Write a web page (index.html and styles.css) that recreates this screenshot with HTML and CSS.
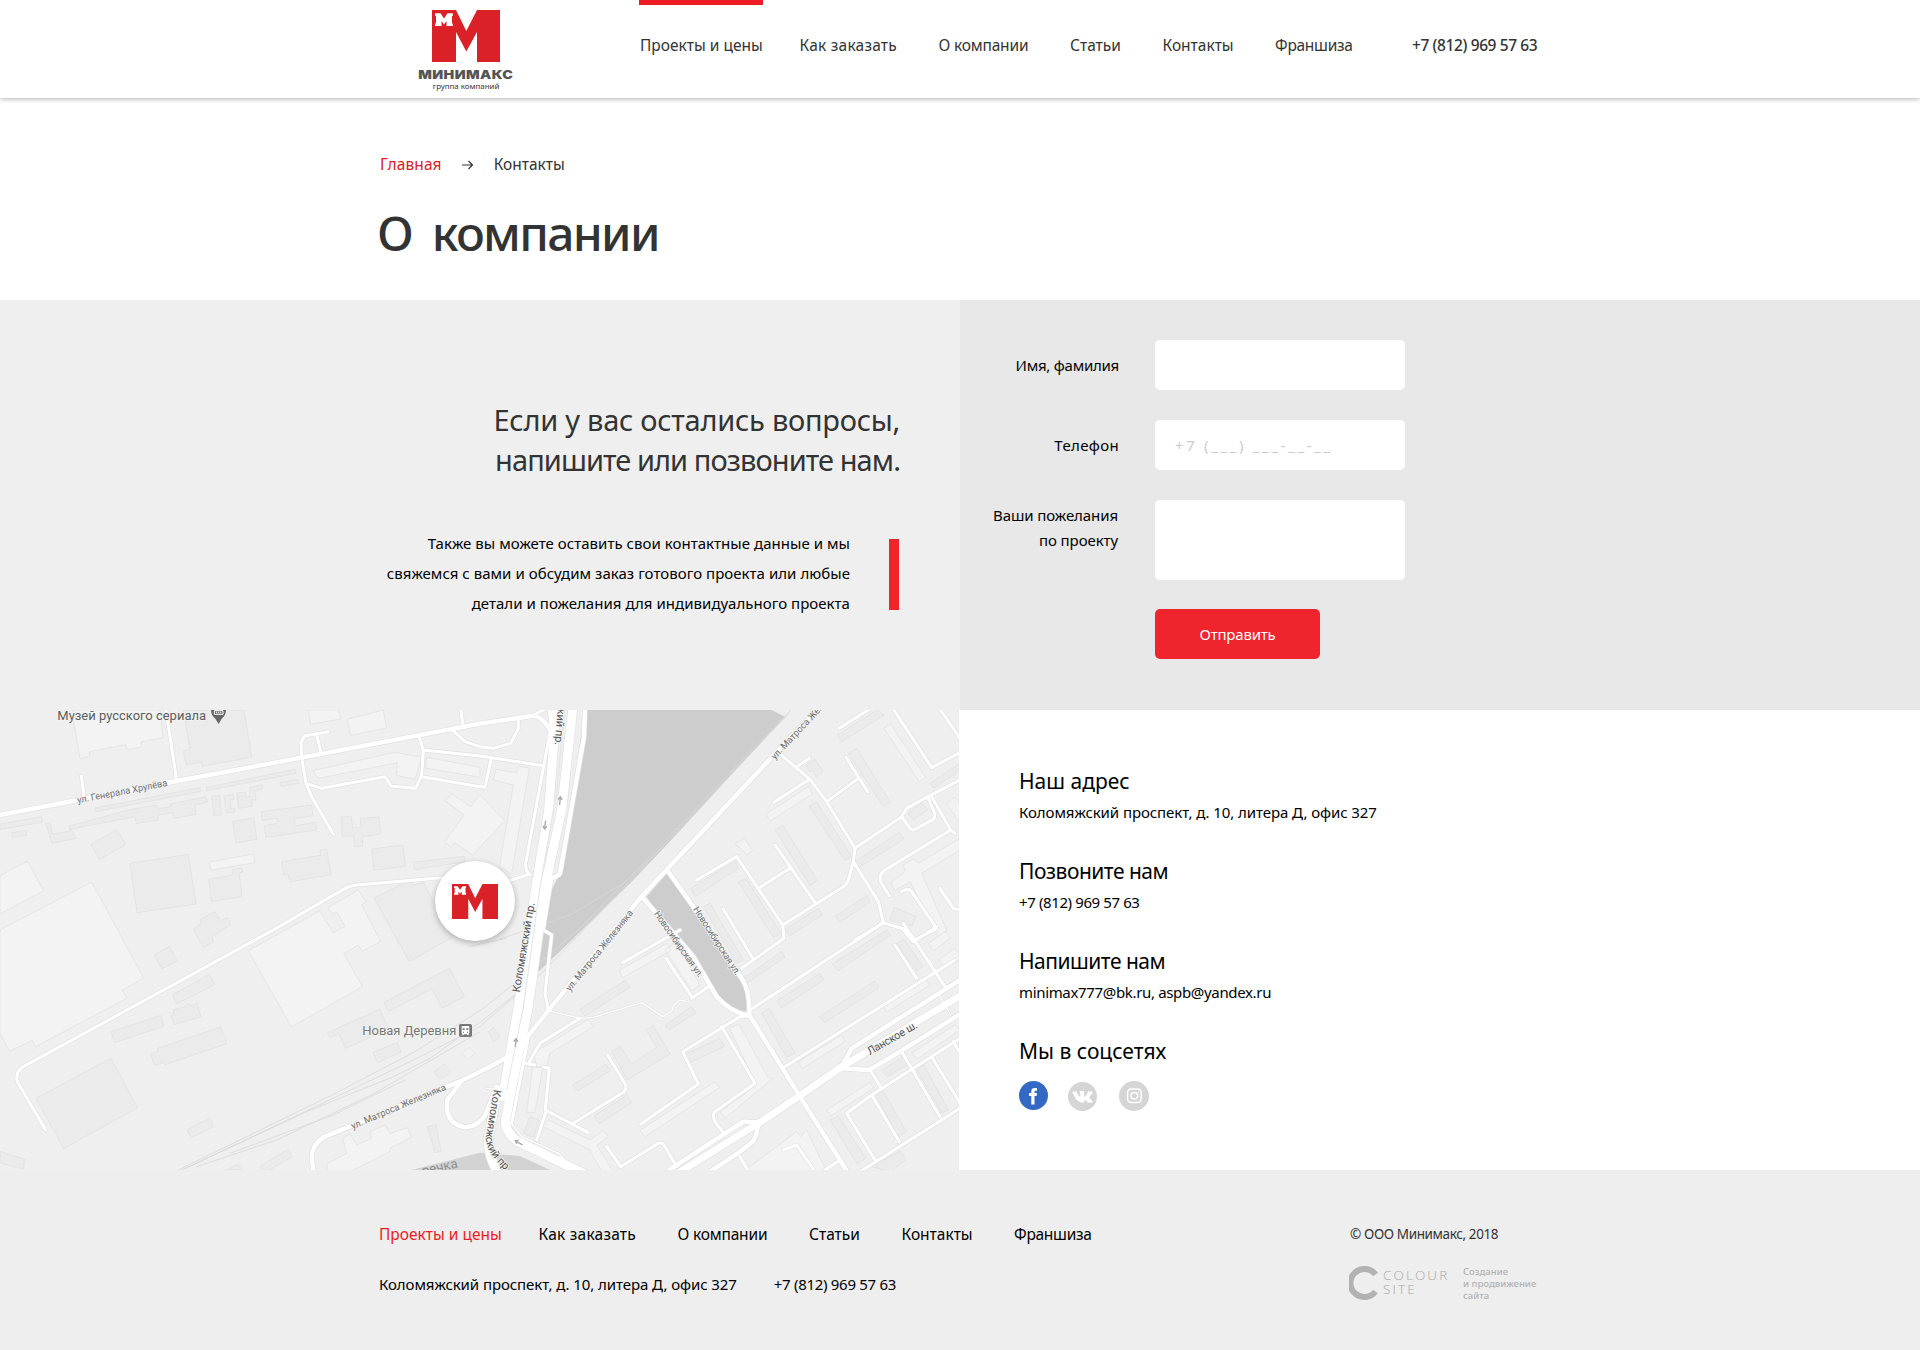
FILE: index.html
```html
<!DOCTYPE html>
<html lang="ru">
<head>
<meta charset="utf-8">
<title>Минимакс — Контакты</title>
<link rel="stylesheet" href="styles.css">
</head>
<body>
<svg class="defs" aria-hidden="true">
  <symbol id="logo-mark" viewBox="0 0 68 52" preserveAspectRatio="none">
    <path class="logo-red" d="M0 0H24L34.300 21 45 0H68V52H45V22L34.300 41.500 24 22V52H0Z"/>
    <path class="logo-white" d="M3 3.300H8.500L12 8.500 15.500 3.300H20.800V6H20V13.500H20.800V16H14.500V11L12 14.500 9.500 11V16H3V13.500H4V6H3Z"/>
  </symbol>
</svg>

<header class="header">
  <div class="container header-inner">
    <a class="logo">
      <svg class="logo-mark"><use href="#logo-mark"/></svg>
      <span class="logo-name">МИНИМАКС</span>
      <span class="logo-sub">группа компаний</span>
    </a>
    <nav class="nav">
      <a class="active">Проекты и цены</a><a>Как заказать</a><a>О компании</a><a>Статьи</a><a>Контакты</a><a>Франшиза</a>
      <span class="nav-phone">+7 (812) 969 57 63</span>
    </nav>
  </div>
</header>

<section class="title container">
  <div class="crumbs">
    <a>Главная</a>
    <svg class="arrow" viewBox="0 0 12 10"><path d="M0 5H10.500M6.500 1L10.500 5 6.500 9"/></svg>
    <span>Контакты</span>
  </div>
  <h1>О компании</h1>
</section>

<section class="ask">
  <div class="ask-text">
    <h2><span>Если у вас остались вопросы,</span><br><span class="tight">напишите или позвоните нам.</span></h2>
    <p>Также вы можете оставить свои контактные данные и мы<br>свяжемся с вами и обсудим заказ готового проекта или любые<br>детали и пожелания для индивидуального проекта</p>
  </div>
  <form class="form">
    <label for="name" class="name">Имя, фамилия</label><input id="name">
    <label for="phone" class="phone">Телефон</label><input id="phone" placeholder="+7 (___) ___-__-__">
    <label for="wish" class="wish">Ваши пожелания<br>по проекту</label><textarea id="wish"></textarea>
    <button type="button">Отправить</button>
  </form>
</section>

<section class="place">
  <div class="map">
  <svg class="map-canvas" viewBox="0 0 2877 1380">
    <g class="light">
      <g transform="translate(0 -30)">
        <path d="M220 30V60L240 175 268 170V155L378 134 382 150 424 141V125L489 113 480 30Z"/>
        <path d="M628 486L760 462 765 488 632 511ZM925 30L932 73 1022 57 1015 30ZM1042 58L1150 30 1160 84 1052 106Z"/>
        <path d="M938 212L1185 157 1265 172 1245 238 1190 226 1192 188 955 235Z"/>
        <path d="M1280 172L1440 202V232L1276 204ZM1336 302L1355 282 1412 320 1440 285 1514 362 1418 465 1365 428 1355 440 1334 427 1392 345Z"/>
        <path d="M0 527L82 484 131 572 0 642Z"/>
        <path d="M0 690L275 546 431 834 367 870 380 895 107 1040 97 1021 29 1054 0 1000Z"/>
        <path d="M960 632L745 752 874 981 1087 860 1031 760 1075 735 1087 754 1142 724 1085 614 1097 605 1075 570 985 622 993 640 1012 638 1035 680 1000 699Z"/>
      </g>
      <g transform="translate(1440 -30)">
        <path d="M40 240L48 208 110 218 115 198 148 204 95 522 58 500 100 255Z"/>
        <path d="M1212 85L1232 72 1337 232 1318 245ZM858 342L985 260 998 282 870 363ZM765 432L793 415 818 452 800 465 782 445Z"/>
        <path d="M1232 548L1275 515 1270 495 1300 478 1315 490 1440 415V450L1325 520 1400 690 1375 710 1290 545 1245 572ZM1400 310L1425 292 1440 310V370Z"/>
      </g>
      <g transform="translate(0 660)">
        <path d="M1387 370L1407 352 1424 370 1404 389Z"/>
        <path d="M980 702L1040 670 1028 625 1050 612 1070 645 1115 625 1110 605 1155 585 1170 610 1222 593 1235 622 1170 655V665L1050 725H985Z"/>
      </g>
      <g transform="translate(1440 660)">
        <path d="M417 122L560 40 572 62 428 143ZM555 60L590 35 660 165 635 182ZM160 370L325 268 340 290 210 370 200 410H170Z"/>
        <path d="M480 600L705 455 718 473 495 620ZM748 295L778 283 862 440 878 445 735 565 720 545 830 465ZM1210 230L1335 145 1350 165 1220 247ZM955 395L1085 315 1095 335 967 415Z"/>
        <path d="M1297 368L1425 285 1440 300 1310 388ZM1040 540L1170 457 1180 475 1052 558ZM158 412H188L165 548H140ZM190 590L205 570 330 630 370 600 385 620 350 645 400 725H365L330 660ZM790 725L950 605 962 620 980 600 1040 725Z"/>
        <path d="M1345 40L1395 5 1410 25 1360 62ZM1375 90L1425 55 1440 75V90L1395 110Z"/>
      </g>
    </g>
    <g class="dark">
      <g transform="translate(0 -30)">
        <path d="M550 30L570 148 550 152 558 193 604 187 606 199 755 171 732 30Z"/>
        <path d="M620 262L885 208 888 220 620 272ZM840 248L892 238 896 250 843 260ZM284 324L600 263 602 274 287 335Z"/>
        <path d="M385 330L470 315 473 327 512 320V312L618 290 622 306 585 315 587 343 522 355 518 338 473 346 474 360 410 371 405 350 213 387 227 415 156 430 137 370 150 368 158 402 210 393 208 378Z"/>
        <path d="M0 372L124 350 126 367 0 388ZM35 398L78 391 80 406 37 412ZM272 434L350 389 377 433 298 479Z"/>
        <path d="M635 290L658 286 665 345 642 347ZM672 288L700 284 702 298 690 300 693 325 704 324 705 336 680 338ZM710 280L735 276 738 292 750 290V262L786 255 788 268 765 272 768 298 755 300 757 318 716 325Z"/>
        <path d="M698 364L762 354 770 418 707 428ZM783 335L935 315 938 347 883 357 886 377 948 367 950 390 798 412 793 377 833 370 830 354 787 362Z"/>
        <path d="M390 490L565 463 588 612 411 638ZM845 485L962 466 960 450 980 447 993 524 870 545 865 525 851 525ZM626 538L698 525 697 508 725 505 728 516 718 520 726 590 635 604Z"/>
        <path d="M1023 352L1053 348 1058 385 1083 381 1081 355 1137 351 1142 402 1088 410V438L1062 440V408L1027 408ZM1115 447L1208 435 1217 498 1122 511ZM1240 487L1392 469 1395 485 1245 509Z"/>
        <path d="M580 688L603 672 601 658 645 635 662 662 682 653 692 675 636 709 640 725 611 742ZM1122 594L1230 540 1240 555 1270 548 1360 710 1228 785Z"/>
      </g>
      <g transform="translate(1440 -30)">
        <path d="M1072 105L1190 30 1212 45 1085 126ZM1105 160L1130 145 1232 308 1210 320ZM988 318L1010 307 1115 470 1095 482ZM885 390L908 376 1013 542 990 556Z"/>
        <path d="M632 565L765 483 775 505 645 590ZM775 545L798 535 903 700 880 712ZM978 195L1005 178 1030 215 1008 230 1000 212 988 215ZM1125 485L1258 397 1272 417 1138 502Z"/>
        <path d="M1066 648L1160 587 1170 606 1080 667ZM915 688L1015 625 1027 645 930 707ZM1243 622L1308 650 1295 678 1230 660ZM1350 250L1440 190V210L1362 265ZM1283 340L1325 308 1343 330 1300 360ZM670 620L690 610 790 780 770 790Z"/>
      </g>
      <g transform="translate(0 660)">
        <path d="M463 75L508 49 533 93 486 116ZM517 195L628 133 645 163 580 197 530 221ZM513 258L520 255V240L555 230 565 220 572 228 590 220 603 260 522 284ZM333 305L482 256 491 289 344 338Z"/>
        <path d="M451 372L473 365V355L662 291 680 341 495 404 490 398 465 407ZM108 505L332 385 413 533 191 656ZM561 600L629 564 641 590 573 623ZM778 710L865 658 877 680 800 725ZM0 664L74 688 70 718 0 698Z"/>
        <path d="M1152 217L1348 115 1393 200 1327 234 1296 176 1165 245ZM982 308L1140 238 1165 298 1037 355 1018 313 990 322ZM1118 368L1192 337 1203 366 1133 398ZM1302 425L1334 402 1352 427 1320 448ZM1283 590L1308 584 1323 664 1305 668ZM680 720L715 702 725 720Z"/>
      </g>
      <g transform="translate(1440 660)">
        <path d="M300 237L435 152 450 172 315 258ZM555 285L635 230 648 248 568 300ZM278 465L378 403 390 423 293 483ZM395 365L420 348 455 402 530 352 498 300 520 287 570 372 442 450Z"/>
        <path d="M610 375L720 325 733 350 625 400ZM342 558L440 495 456 518 358 580ZM845 250L867 235 945 368 920 382ZM890 212L1020 130 1032 150 905 233ZM1018 260L1185 153 1197 173 1035 278Z"/>
        <path d="M1057 102L1220 0 1232 15 1075 122ZM1205 420L1275 378 1290 400 1220 440ZM1050 570L1075 558 1157 685 1132 702ZM1185 490L1208 482 1280 605 1255 620ZM1310 420L1332 405 1405 540 1385 548Z"/>
        <path d="M1250 40L1272 28 1330 110 1308 122ZM790 145L905 65 915 82 800 160ZM150 560L178 570 160 622 130 610ZM1175 710L1260 663 1278 690 1230 725ZM25 305L40 292 60 320 40 335Z"/>
      </g>
    </g>
    <g class="water" transform="translate(1440 -30)">
      <path d="M315 30H875L915 50 555 440 455 545 270 725 158 832 190 620 240 520Z"/>
      <path d="M565 515L640 620 790 840 805 880 803 930 780 938 740 915 700 870 570 690 500 590Z"/>
    </g>
    <path class="water river" transform="translate(1440 660)" d="M-205 720L0 668 120 678 215 722Z"/>
    <g class="rail">
      <path transform="translate(0 660)" d="M535 720L1000 493 1245 365 1440 242 1600 115 1745 -10 2375 -662M545 720L920 545 1180 440 1290 385 1460 262 1620 135 1760 -10 2365 -648M555 716L800 600 1230 395 1440 290 1600 150M690 670L1000 555 1215 450M590 710L830 630 1120 492 1440 305M1408 50L1440 42 1520 25"/>
      <path transform="translate(1440 -30)" d="M550 440L430 550 270 645 140 690 60 717"/>
    </g>
    <defs>
      <g id="paths">
        <path transform="translate(1440 660)" d="M210 243L300 265 340 262 485 218 548 260 575 245 580 228 597 210 620 215M95 580L125 620 235 670 255 690M20 475L45 478M105 435L125 436M1375 190L1412 255"/>
      </g>
      <g id="minor">
        <path transform="translate(0 -30)" d="M498 30L530 240M244 228L252 290M985 95L915 107 903 125 905 173 918 250 965 265 1155 230 1173 258 1247 265 1265 225 1270 150 1257 108M950 105L962 155M918 250L935 290 1000 403M1270 150L1440 168 1630 197M1265 230L1440 260M1355 88L1395 125 1440 140 1480 145 1532 130 1555 85V60M1382 20L1388 70"/>
        <path transform="translate(0 -30)" d="M1590 522L1535 540 1325 533 1070 555Q1050 557 1030 568L820 690 70 1100Q45 1115 52 1145L137 1290"/>
        <path transform="translate(1440 -30)" d="M33 178L15 262 0 258M155 48L200 25M205 -10L213 80 137 490Q135 510 150 525M215 540L190 690 215 705 195 880 205 930"/>
        <path transform="translate(1440 -30)" d="M895 158L990 238 1040 305 1125 445 1120 485 1195 605 1210 668 1125 720M955 197L988 174M985 240L882 307M1040 305L1135 235M1098 172L1163 275M1125 445L1265 350 1280 325 1340 292 1440 240M1265 350L1290 385Q1298 395 1310 385L1360 358Q1368 350 1362 335L1345 295M1355 290L1412 390 1425 400M1412 390L1215 510Q1195 525 1202 545L1228 587"/>
        <path transform="translate(1440 -30)" d="M1235 20L1355 203 1445 155M1078 85L1180 20M1375 20L1445 122M1120 485L1105 540Q1100 555 1090 560L908 675 770 470 650 540M840 562L930 505M885 435L1005 608M908 675L912 715 785 805M730 628L820 778M1265 575Q1285 560 1295 575L1370 685 1305 720 1280 690 1210 668M1380 565L1420 625 1440 630M810 930L1210 668M428 788L600 690M1270 690L1300 725"/>
        <path transform="translate(1440 660)" d="M808 258L780 260 608 365 655 462 482 583M725 290L825 460 705 545Q695 555 705 575L727 605M683 172L635 205M558 85L635 200M300 265L180 340 148 395M145 320L130 400 95 580M132 400L165 405M190 412L208 415 196 540 325 608M198 545L170 630M383 375L437 465Q440 480 430 487L280 580M380 650L422 710 535 640Q548 635 555 650L590 710"/>
        <path transform="translate(1440 660)" d="M780 680L805 725M912 412L1425 90M1245 45L1310 145M1270 -20L1290 10 1395 170M1300 35L1370 -10M1140 725L1440 535M1185 690L1100 550 1175 495 1440 325M1175 495L1258 635M1268 370L1380 560M1355 380L1440 520M1420 335L1440 370M1170 420L1205 475M910 660L950 645 1005 725M1020 730L1080 690"/>
      </g>
      <g id="streets">
        <path transform="translate(0 -30)" d="M-10 347L530 243 905 173 1440 71 1595 48Q1625 45 1650 90"/>
        <path transform="translate(1440 -30)" d="M315 25L312 110 240 520Q235 530 205 537M1060 -20L900 145 480 595 255 870 110 1050Q90 1070 0 1115L-55 1142 -470 1312Q-505 1335 -505 1375L-498 1420M-55 1142L-98 1200Q-108 1270 -45 1282 0 1280 20 1235L50 1160M490 595L640 770 710 890Q750 935 800 945M565 515L640 620 785 835Q810 870 808 945M808 945L960 1190 1105 1420"/>
        <path transform="translate(1440 660)" d="M840 577L790 575 570 718M835 580Q830 620 820 632 800 655 690 725M1085 410L1115 355 1440 150M1085 415L1165 420Q1190 410 1440 252"/>
      </g>
      <g id="avenue">
        <path transform="translate(1440 660)" d="M590 732L840 577 960 497 1085 410 1445 195"/>
      </g>
      <g id="main">
        <path transform="translate(1440 -30)" d="M230 10L206 330 168 560 115 920 68 1190M280 10L245 330 195 560 145 920 92 1180 76 1265Q78 1300 115 1325L320 1425M52 1170L30 1290Q12 1350 60 1430"/>
      </g>
    </defs>
    <use href="#paths" class="case w-path"/><use href="#minor" class="case w-minor"/><use href="#streets" class="case w-street"/><use href="#avenue" class="case w-avenue"/><use href="#main" class="case w-main"/>
    <use href="#paths" class="fill w-path"/><use href="#minor" class="fill w-minor"/><use href="#streets" class="fill w-street"/><use href="#avenue" class="fill w-avenue"/><use href="#main" class="fill w-main"/>
    <path class="median" transform="translate(1440 -30)" d="M253 30L232 260 180 560 130 920 80 1170"/>
    <g class="direction">
      <path d="M0 13V-9M-6 -3L0 -12 6 -3" transform="translate(1680 272) rotate(6)"/>
      <path d="M0 13V-9M-6 -3L0 -12 6 -3" transform="translate(1635 345) rotate(188)"/>
      <path d="M0 13V-9M-6 -3L0 -12 6 -3" transform="translate(1547 998) rotate(6)"/>
      <path d="M0 13V-9M-6 -3L0 -12 6 -3" transform="translate(1556 1298) rotate(-60)"/>
    </g>
    <g class="place-name">
      <text x="172" y="30" textLength="446">Музей русского сериала</text>
      <text class="station" x="1087" y="974" textLength="282">Новая Деревня</text>
    </g>
    <g class="street-name">
      <text transform="translate(233 280) rotate(-11)" textLength="275">ул. Генерала Хрулёва</text>
      <text transform="translate(2325 150) rotate(-47)" textLength="306">ул. Матроса Железняка</text>
      <text transform="translate(1710 845) rotate(-51)" textLength="303">ул. Матроса Железняка</text>
      <text transform="translate(1058 1258) rotate(-23)" textLength="306">ул. Матроса Железняка</text>
      <text transform="translate(1961 611) rotate(55)" textLength="236">Новосибирская ул.</text>
      <text transform="translate(2078 598) rotate(57)" textLength="238">Новосибирская ул.</text>
    </g>
    <g class="avenue-name">
      <text transform="translate(1559 848) rotate(-80.500)" textLength="272">Коломяжский пр.</text>
      <text transform="translate(1664 105) rotate(95)" text-anchor="end" textLength="272">Коломяжский пр.</text>
      <path id="bend" class="guide" d="M1481 1138L1458 1280Q1452 1335 1560 1420"/>
      <text><textPath href="#bend">Коломяжский пр.</textPath></text>
      <text transform="translate(2609 1036) rotate(-30)" textLength="168">Ланское ш.</text>
    </g>
    <text class="river-name" transform="translate(1375 1372) rotate(-13)" text-anchor="end">Чёрная речка</text>
    <path class="poi" d="M633 0H678Q677 18 665 26L656 42 646 26Q634 18 633 0Z"/>
    <path class="poi-detail" d="M643 2H669V13H643ZM650 5V10M656 5V10M662 5V10"/>
    <g transform="translate(1377 942)">
      <rect class="station-box" width="39" height="39" rx="6"/>
      <path class="station-train" d="M11 6H28Q31 6 31 9V27Q31 30 28 30L31 34H26L24 31H15L13 34H8L11 30Q8 30 8 27V9Q8 6 11 6Z"/>
      <path class="station-detail" d="M11 13H17V18H11ZM22 13H28V18H22ZM12 23H15V26H12ZM24 23H27V26H24Z"/>
    </g>
  </svg>
  <div class="marker"><svg><use href="#logo-mark"/></svg></div>
  </div>

  <div class="contacts">
    <h3>Наш адрес</h3><p class="addr">Коломяжский проспект, д. 10, литера Д, офис 327</p>
    <h3 class="call">Позвоните нам</h3><p class="tel">+7 (812) 969 57 63</p>
    <h3 class="write">Напишите нам</h3><p class="mail">minimax777@bk.ru, aspb@yandex.ru</p>
    <h3>Мы в соцсетях</h3>
    <div class="social">
      <svg class="fb" viewBox="0 0 29 29"><circle cx="14.500" cy="14.500" r="14.500"/><path d="M12.300 23.500V15H10V12H12.300V10.300Q12.300 7 15.800 7H18V9.800H16.600Q15.500 9.800 15.500 11V12H18L17.600 15H15.500V23.500Z"/></svg>
      <svg class="vk" viewBox="0 0 29 29"><circle cx="14.500" cy="14.500" r="14.500"/><path transform="translate(4.300 4.600) scale(.85)" d="M11.701 18.771h1.437s.433-.047.654-.284c.21-.221.21-.63.21-.63s-.031-1.927.869-2.210c.887-.281 2.012 1.860 3.211 2.683.916.629 1.605.494 1.605.494l3.211-.044s1.682-.105.887-1.426c-.061-.105-.451-.975-2.371-2.760-2.012-1.861-1.742-1.561.676-4.787 1.469-1.965 2.070-3.166 1.875-3.676-.166-.480-1.260-.361-1.260-.361l-3.602.031s-.270-.031-.465.090c-.195.119-.314.391-.314.391s-.572 1.529-1.336 2.820c-1.623 2.729-2.268 2.879-2.523 2.699-.604-.391-.449-1.580-.449-2.432 0-2.641.404-3.750-.781-4.035-.390-.091-.681-.150-1.685-.166-1.290-.014-2.378.010-2.995.311-.405.203-.720.652-.539.675.240.030.779.146 1.064.537.375.506.359 1.636.359 1.636s.211 3.116-.494 3.503c-.495.262-1.155-.280-2.595-2.756-.735-1.260-1.291-2.670-1.291-2.670s-.105-.256-.299-.406c-.227-.165-.557-.225-.557-.225l-3.435.030s-.510.016-.689.240c-.166.195-.016.615-.016.615s2.686 6.287 5.732 9.453c2.790 2.902 5.956 2.715 5.956 2.715z"/></svg>
      <svg class="ig" viewBox="0 0 30 30"><circle cx="15" cy="15" r="15"/><g><rect x="8.600" y="8" width="13.500" height="13.500" rx="3.500"/><circle cx="15.300" cy="14.800" r="3.300"/><path d="M18.800 11.200h.8"/></g></svg>
    </div>
  </div>
</section>

<footer class="footer">
  <div class="container footer-inner">
    <div>
      <nav class="nav footer-nav">
        <a class="active">Проекты и цены</a><a>Как заказать</a><a>О компании</a><a>Статьи</a><a>Контакты</a><a>Франшиза</a>
      </nav>
      <div class="footer-row"><span class="addr">Коломяжский проспект, д. 10, литера Д, офис 327</span><span class="tel">+7 (812) 969 57 63</span></div>
    </div>
    <div class="legal">
      <div class="copy">© ООО Минимакс, 2018</div>
      <div class="studio">
        <svg class="studio-mark" viewBox="0 0 30 34"><path d="M26.500 8.500A14 14 0 1 0 26.500 25.500"/></svg>
        <div class="studio-name"><span>COLOUR</span><span>SITE</span></div>
        <div class="studio-note">Создание<br>и продвижение<br>сайта</div>
      </div>
    </div>
  </div>
</footer>
</body>
</html>
```
FILE: styles.css
```css
* { box-sizing: border-box; }
body { margin: 0; width: 1920px; height: 1350px; overflow: hidden; background: #fff; color: #000; font: 15px/30px "Noto Sans", sans-serif; }
h1, h2, h3, p { margin: 0; font-weight: 400; }
.defs { position: absolute; width: 0; height: 0; }
.container { width: 1162px; margin: 0 auto; }
.logo-red { fill: #da2128; }
.logo-white { fill: #fff; }

.header { height: 98px; box-shadow: 0 1px 5px rgba(0, 0, 0, .3); }
.header-inner { display: flex; }
.logo { width: 174px; height: 98px; padding-top: 10px; margin-right: 42.500px; display: flex; flex-direction: column; align-items: center; flex: none; }
.logo-mark { width: 68px; height: 52px; display: block; }
.logo-name { font: 900 12.200px/16px Inter, sans-serif; color: #555; margin-top: 5px; letter-spacing: .350px; transform: scaleX(1.165); }
.logo-sub { font: 400 7.900px/10px "Noto Sans", sans-serif; color: #333; margin-top: -2px; }
.nav { display: grid; grid-template-columns: 159.500px 139px 131.500px 92.500px 112.500px 137px auto; color: #333; font-size: 15.500px; line-height: 20px; white-space: nowrap; }
.header .nav { margin-left: 43.500px; }
.nav > * { padding-top: 35px; padding-left: 1px; justify-self: start; }
.nav a:nth-child(2) { letter-spacing: .220px; }
.nav a:nth-child(3) { letter-spacing: -.180px; }
.nav a:nth-child(6) { letter-spacing: -.280px; }
.header .active { padding-top: 30px; border-top: 5px solid #ed1c24; }
.nav-phone { font-weight: 500; letter-spacing: -.380px; }

.title { height: 202px; padding-top: 54px; }
.crumbs { display: flex; align-items: center; height: 24px; font-size: 15.500px; color: #333; padding-left: 1px; }
.crumbs a { color: #da2128; letter-spacing: .100px; }
.arrow { width: 12px; height: 10px; margin: 1px 20px 0 20px; fill: none; stroke: #333; stroke-width: 1.200; }
h1 { font-size: 48px; font-weight: 500; line-height: 60px; letter-spacing: -1.700px; word-spacing: 9px; color: #333; margin: 27px 0 0 -2px; }

.ask { display: flex; height: 410px; }
.ask-text { width: 960px; background: #efefef; padding: 100px 60px 0 0; text-align: right; }
h2 { font-size: 29px; line-height: 40px; color: #333; letter-spacing: -.250px; }
h2 .tight { letter-spacing: -.920px; }
.ask-text p { display: flex; flex-direction: column; justify-content: center; margin: 59px 1px 0 0; height: 71px; border-right: 10px solid #f0242c; padding: 0 39px 0 0; line-height: 30px; letter-spacing: .040px; }
.ask-text p { display: block; }
.ask-text p::before { content: ""; display: block; height: 0; margin-top: -11px; padding-bottom: 0; }
.ask-text p { display: flow-root; }
.form { width: 960px; background: #e8e8e8; padding-top: 40px; display: grid; grid-template-columns: 159px 250px; column-gap: 36px; row-gap: 30px; align-content: start; text-align: right; }
.form label { line-height: 50px; }
.form .name { letter-spacing: -.250px; }
.form .phone { letter-spacing: .350px; }
.form .wish { line-height: 25px; padding: 3px 1px 0 0; letter-spacing: -.080px; }
.form input, .form textarea { border: 0; border-radius: 5px; background: #fff; height: 50px; width: 250px; padding: 0 20px; font: 15px "Noto Sans", sans-serif; resize: none; display: block; }
.form textarea { height: 80px; }
.form input::placeholder { color: #ccc; letter-spacing: 2.650px; opacity: 1; }
.form button { grid-column: 2; width: 165px; height: 50px; margin-top: -1px; border: 0; border-radius: 5px; background: #f0242c; color: #fff; font: 15px "Noto Sans", sans-serif; letter-spacing: -.200px; padding: 0; }

.place { display: flex; height: 460px; }
.map { position: relative; width: 959px; height: 460px; overflow: hidden; background: #efefef; flex: none; }
.map-canvas { display: block; width: 959px; height: 460px; }
.light { fill: #f3f3f3; stroke: #e2e2e2; stroke-width: 2.500; }
.dark { fill: #ebebeb; stroke: #e1e1e1; stroke-width: 2.500; }
.water { fill: #cdcdcd; }
.river { fill: #d2d2d2; }
.rail { fill: none; stroke: #d9d9d9; stroke-width: 2.500; }
.case, .fill { fill: none; stroke-linecap: round; stroke-linejoin: round; }
.case { stroke: #e1e1e1; }
.fill { stroke: #fff; }
.w-path.fill { stroke-width: 4px; } .w-path.case { stroke-width: 7px; }
.w-minor.fill { stroke-width: 9px; } .w-minor.case { stroke-width: 13px; }
.w-street.fill { stroke-width: 13px; } .w-street.case { stroke-width: 17px; }
.w-avenue.fill { stroke-width: 21px; } .w-avenue.case { stroke-width: 25px; }
.w-main.fill { stroke-width: 27px; } .w-main.case { stroke-width: 31px; }
.median { fill: none; stroke: #e6e6e6; stroke-width: 3; }
.direction { fill: none; stroke: #aaa; stroke-width: 4; }
.guide { fill: none; }
.map text { font-family: Roboto, sans-serif; paint-order: stroke; stroke: #f4f4f4; stroke-width: 5px; stroke-linejoin: round; }
.place-name { font-size: 39px; fill: #5c5c5c; }
.station { fill: #777; }
.street-name { font-size: 28px; fill: #6e6e6e; }
.avenue-name { font-size: 33px; fill: #555; }
.map .river-name { font-size: 40px; fill: #909090; stroke: none; }
.poi { fill: #666; }
.poi-detail { fill: none; stroke: #fff; stroke-width: 3; }
.station-box { fill: #777; }
.station-train { fill: #fff; }
.station-detail { fill: #777; }
.marker { position: absolute; left: 435px; top: 151px; width: 80px; height: 80px; border-radius: 50%; background: #fff; box-shadow: 0 2px 6px rgba(0, 0, 0, .28); display: grid; place-items: center; }
.marker svg { width: 46px; height: 35px; display: block; }

.contacts { padding: 57px 0 0 60px; }
h3 { font-size: 21px; line-height: 30px; height: 30px; letter-spacing: 0; margin-top: -1px; padding-bottom: 1px; }
h3.call, h3.write { letter-spacing: -.500px; }
.contacts p { height: 61px; line-height: 32px; }
.contacts h3:first-child { margin-top: -1px; }
.addr { letter-spacing: -.080px; }
.tel { letter-spacing: -.390px; }
.mail { letter-spacing: -.340px; }
.social { display: flex; margin: 15px 0 0 0; }
.social svg { flex: none; }
.social circle { fill: #d5d5d5; }
.social path { fill: #fff; }
.social .fb circle { fill: #3369c5; }
.fb, .vk { width: 29px; height: 29px; }
.vk { margin: 1px 22px 0 20px; }
.ig { width: 30px; height: 30px; }
.ig g circle, .ig g rect, .ig g path { fill: none; stroke: #fff; stroke-width: 1.500; }

.footer { height: 180px; background: #eee; }
.footer-inner { display: flex; justify-content: space-between; }
.footer-nav { padding-top: 54px; margin-left: -1px; color: #000; }
.footer-nav > * { padding-top: 0; }
.footer-nav .active { color: #ed1c24; }
.footer-row { display: flex; gap: 37px; margin: 25px 0 0 0; line-height: 30px; white-space: nowrap; }
.footer-row .tel { letter-spacing: -.300px; }
.legal { width: 192px; padding-top: 54px; }
.copy { font-size: 13.500px; line-height: 20px; letter-spacing: -.380px; color: #333; padding-left: 1px; }
.studio { display: flex; margin-top: 22px; color: #b2b2b2; }
.studio-mark { width: 30px; height: 34px; fill: none; stroke: #b2b2b2; stroke-width: 6; }
.studio-name { display: flex; flex-direction: column; width: 80px; margin: 2px 0 0 4px; font: 300 13.500px/14px "Open Sans", sans-serif; letter-spacing: 2.100px; color: #a8a8a8; }
.studio-note { font: 500 9.500px/12px "Noto Sans", sans-serif; white-space: nowrap; }
```
